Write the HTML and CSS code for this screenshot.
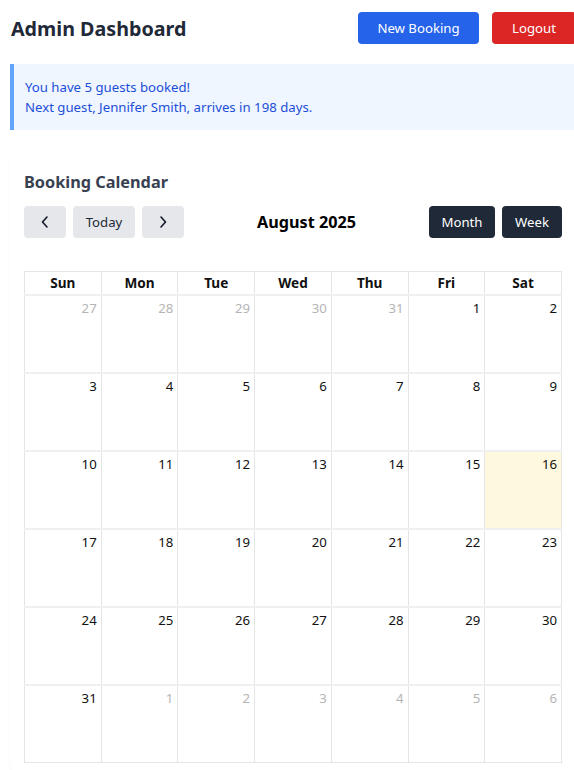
FILE: index.html
```html
<!DOCTYPE html>
<html>
<head>
<meta charset="utf-8">
<link rel="stylesheet" href="styles.css">
</head>
<body>
<div class="page">
  <header class="topbar">
    <h1 class="title">Admin Dashboard</h1>
    <div class="actions">
      <button class="btn btn-blue">New Booking</button>
      <button class="btn btn-red">Logout</button>
    </div>
  </header>

  <div class="alert">
    <p>You have 5 guests booked!</p>
    <p>Next guest, Jennifer Smith, arrives in 198 days.</p>
  </div>

  <section class="card">
    <h2 class="card-title">Booking Calendar</h2>
    <div class="toolbar">
      <div class="tb-group">
        <button class="tb-btn tb-icon" aria-label="prev"><svg width="10" height="14" viewBox="0 0 10 14"><path d="M7 2 L2.5 7 L7 12" fill="none" stroke="#111827" stroke-width="1.6" stroke-linecap="round" stroke-linejoin="round"/></svg></button>
        <button class="tb-btn tb-today">Today</button>
        <button class="tb-btn tb-icon" aria-label="next"><svg width="10" height="14" viewBox="0 0 10 14"><path d="M3 2 L7.5 7 L3 12" fill="none" stroke="#111827" stroke-width="1.6" stroke-linecap="round" stroke-linejoin="round"/></svg></button>
      </div>
      <h2 class="tb-title">August 2025</h2>
      <div class="tb-group">
        <button class="tb-btn tb-dark tb-month">Month</button>
        <button class="tb-btn tb-dark tb-week">Week</button>
      </div>
    </div>

    <table class="cal">
      <thead>
        <tr><th>Sun</th><th>Mon</th><th>Tue</th><th>Wed</th><th>Thu</th><th>Fri</th><th>Sat</th></tr>
      </thead>
      <tbody>
        <tr><td class="other">27</td><td class="other">28</td><td class="other">29</td><td class="other">30</td><td class="other">31</td><td>1</td><td>2</td></tr>
        <tr><td>3</td><td>4</td><td>5</td><td>6</td><td>7</td><td>8</td><td>9</td></tr>
        <tr><td>10</td><td>11</td><td>12</td><td>13</td><td>14</td><td>15</td><td class="today">16</td></tr>
        <tr><td>17</td><td>18</td><td>19</td><td>20</td><td>21</td><td>22</td><td>23</td></tr>
        <tr><td>24</td><td>25</td><td>26</td><td>27</td><td>28</td><td>29</td><td>30</td></tr>
        <tr><td>31</td><td class="other">1</td><td class="other">2</td><td class="other">3</td><td class="other">4</td><td class="other">5</td><td class="other">6</td></tr>
      </tbody>
    </table>
  </section>
</div>
</body>
</html>
```

FILE: styles.css
```css
* { box-sizing: border-box; }
html, body { margin: 0; padding: 0; overflow-x: hidden; }
body {
  font-family: "Noto Sans", "Open Sans", sans-serif;
  color: #111827;
  background: #fff;
}
.page {
  width: 566px;
  margin-left: 10px;
  padding-top: 12px;
}
.topbar {
  display: flex;
  align-items: center;
  justify-content: space-between;
  height: 32px;
}
.title {
  margin: 0 0 0 1px;
  font-size: 19.7px;
  font-weight: 700;
  color: #1f2937;
}
.actions { display: flex; gap: 13px; }
.btn {
  font-family: inherit;
  font-size: 13.2px;
  height: 32px;
  border: none;
  border-radius: 4px;
  color: #fff;
  padding: 0;
  cursor: pointer;
  white-space: nowrap;
}
.btn-blue { background: #2563eb; width: 121px; }
.btn-red { background: #dc2626; width: 84px; }

.alert {
  margin-top: 20px;
  background: #eff6ff;
  border-left: 4px solid #60a5fa;
  padding: 13px 11px;
  color: #1d4ed8;
  font-size: 13.2px;
  line-height: 20px;
}
.alert p { margin: 0; }

.card {
  margin-top: 26px;
  background: #fff;
  border-radius: 6px;
  box-shadow: 0 1px 3px rgba(0,0,0,0.04);
  padding: 14px 14px 8px 14px;
}
.card-title {
  margin: 0 0 12px 0;
  font-size: 16.3px;
  line-height: 24px;
  font-weight: 700;
  color: #374151;
}
.toolbar {
  display: flex;
  align-items: center;
  justify-content: space-between;
  margin-bottom: 33px;
}
.tb-group { display: flex; gap: 7px; }
.tb-btn {
  font-family: inherit;
  font-size: 13.2px;
  height: 32px;
  border: none;
  border-radius: 4px;
  background: #e5e7eb;
  color: #1f2937;
  padding: 0;
  display: flex;
  align-items: center;
  justify-content: center;
  white-space: nowrap;
}
.tb-icon { width: 42px; }
.tb-today { width: 62px; }
.tb-dark { background: #1f2937; color: #fff; }
.tb-month { width: 66px; }
.tb-week { width: 60px; }
.tb-title {
  margin: 0;
  font-size: 16.2px;
  font-weight: 700;
  color: #000;
}

.cal {
  width: 538px;
  border-collapse: collapse;
  table-layout: fixed;
  font-size: 13.2px;
}
.cal th, .cal td { border: 1px solid #e5e5e5; }
.cal th {
  height: 23px;
  padding: 0;
  font-weight: 700;
  color: #111;
  font-size: 13.6px;
}
.cal td {
  height: 78px;
  vertical-align: top;
  text-align: right;
  padding: 2px 4px 0 0;
  color: #111;
  line-height: 20px;
}
.cal tbody tr td { border-top-width: 2px; border-top-color: #efefef; }
.cal td.other { color: #b5b5b5; }
.cal td.today { background: #fef8df; }
```
